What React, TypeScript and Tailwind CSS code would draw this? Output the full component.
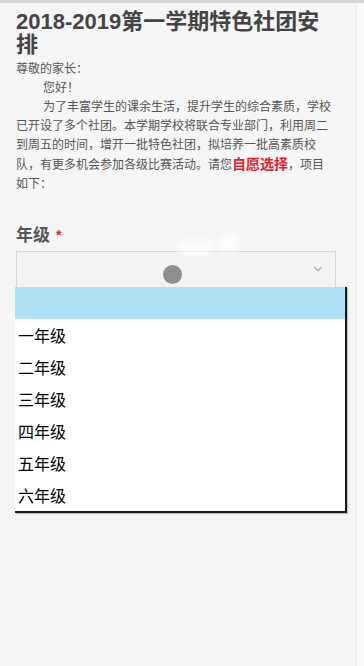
import { ChevronDown } from 'lucide-react';

const grades = ['一年级', '二年级', '三年级', '四年级', '五年级', '六年级'];

export default function App() {
  return (
    <div
      className="relative flex h-[666px] w-[364px] overflow-hidden bg-[#f6f6f6]"
      style={{ fontFamily: '"Liberation Sans", "Noto Sans CJK SC", sans-serif' }}
    >
      <div className="absolute left-0 top-0 h-[3px] w-full bg-[#d6d6d6]" />

      <main className="w-[356px] pl-4 pr-5 pt-[10px]">
        <h1 className="max-w-[315px] text-[22px] font-bold leading-[23px] text-[#444]">
          2018-2019第一学期特色社团安排
        </h1>

        <div className="mt-[4px] text-[12px] leading-[19px] text-[#555]">
          <p>尊敬的家长：</p>
          <p className="indent-[27px]">您好！</p>
          <p className="indent-[27px]">
            为了丰富学生的课余生活，提升学生的综合素质，学校已开设了多个社团。本学期学校将联合专业部门，利用周二到周五的时间，增开一批特色社团，拟培养一批高素质校队，有更多机会参加各级比赛活动。请您
            <span className="text-[14px] font-bold text-[#e8202a]">自愿选择</span>，项目如下：
          </p>
        </div>

        <div className="mt-[29px]">
          <label className="flex items-center gap-[6px] text-[17px] font-bold text-[#555]">
            年级<span className="text-[14px] text-[#e8202a]">*</span>
          </label>

          <div className="relative mt-[2px] flex h-[40px] items-center justify-end border border-[#d8d8d8] bg-[#f3f3f3] pr-[10px]">
            <ChevronDown className="-mt-[4px] h-[14px] w-[14px] text-[#b4b4b4]" strokeWidth={2.5} />
            <div className="absolute left-[146px] top-[13px] h-[19px] w-[19px] rounded-full bg-[#8f8f8f]" />
            <div className="absolute -top-[12px] left-[160px] h-[14px] w-[36px] rounded-full bg-white/80 blur-[3px]" />
            <div className="absolute -top-[18px] left-[202px] h-[18px] w-[20px] rounded-full bg-white/80 blur-[3px]" />
          </div>
        </div>
      </main>

      <div className="w-[8px] border-l border-[#ececec] bg-[#fbfbfb]" />

      <ul className="absolute left-[15px] top-[287px] w-[332px] border-b-[2px] border-r-[2px] border-[#1a1a1a] bg-white text-[16px] text-black shadow-[1px_1px_1px_rgba(150,120,60,0.4)]">
        <li className="h-[32px] bg-[#ade0f5]" />
        {grades.map((g) => (
          <li key={g} className="flex h-[32px] items-center pl-[3px] pt-[3px]">
            {g}
          </li>
        ))}
      </ul>
    </div>
  );
}
